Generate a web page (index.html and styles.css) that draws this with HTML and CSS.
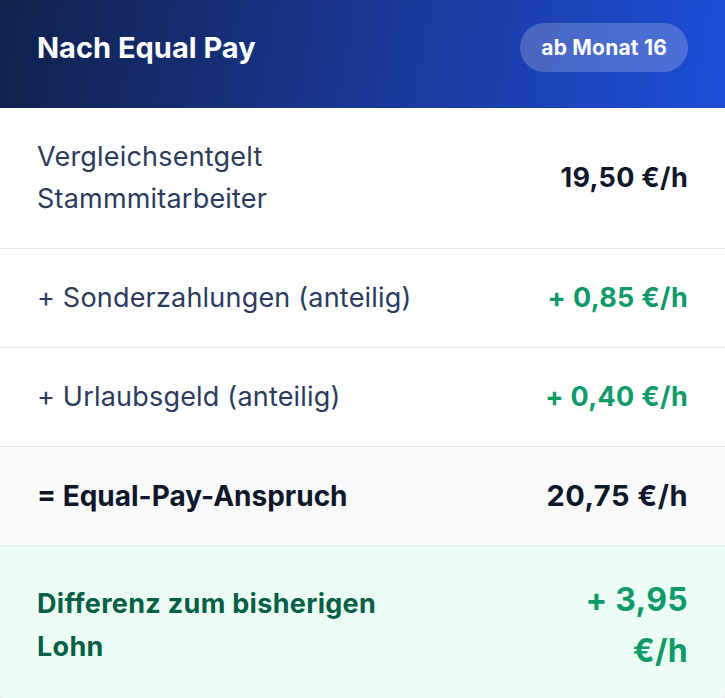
FILE: index.html
```html
<!DOCTYPE html>
<html lang="de">
<head>
  <meta charset="UTF-8" />
  <meta name="viewport" content="width=device-width, initial-scale=1.0" />
  <title>Nach Equal Pay</title>
  <link rel="stylesheet" href="styles.css">
</head>
<body>
  <div class="card">
    <div class="card-header">
      <h2>Nach Equal Pay</h2>
      <span class="badge">ab Monat 16</span>
    </div>

    <div class="row">
      <span class="label">Vergleichsentgelt<br>Stammmitarbeiter</span>
      <span class="value">19,50 €/h</span>
    </div>
    <div class="row">
      <span class="label">+ Sonderzahlungen (anteilig)</span>
      <span class="value plus">+ 0,85 €/h</span>
    </div>
    <div class="row">
      <span class="label">+ Urlaubsgeld (anteilig)</span>
      <span class="value plus">+ 0,40 €/h</span>
    </div>
    <div class="row total">
      <span class="label">= Equal-Pay-Anspruch</span>
      <span class="value">20,75 €/h</span>
    </div>
    <div class="row diff">
      <span class="label">Differenz zum bisherigen Lohn</span>
      <span class="value">+ 3,95 €/h</span>
    </div>
  </div>
</body>
</html>
```

FILE: styles.css
```css
body {
  margin: 0;
  font-family: Inter, "Noto Sans", sans-serif;
  background-color: #eef1f6;
}
.card {
  background-color: #fff;
  border-radius: 0 0 16px 16px;
  overflow: hidden;
}
.card-header {
  display: flex;
  align-items: center;
  justify-content: space-between;
  height: 108px;
  padding: 0 37px 14px;
  box-sizing: border-box;
  background: linear-gradient(100deg, #10214a 0%, #1a3a9a 55%, #1d4ed8 100%);
  color: #fff;
}
.card-header h2 {
  margin: 0;
  font-size: 29px;
  font-weight: 700;
}
.badge {
  display: flex;
  align-items: center;
  height: 49px;
  padding: 0 21px;
  border-radius: 25px;
  background-color: rgba(255,255,255,0.2);
  font-size: 21px;
  font-weight: 700;
  letter-spacing: 0.2px;
}
.row {
  display: flex;
  align-items: center;
  justify-content: space-between;
  padding: 28px 37px;
  border-bottom: 1px solid #e2e8f0;
  font-size: 27px;
  line-height: 42px;
}
.row:first-of-type {
  line-height: 43px;
}
.label {
  color: #2b3b5e;
  letter-spacing: 0.2px;
}
.value {
  font-weight: 700;
  color: #0f172a;
  text-align: right;
  font-size: 27px;
  letter-spacing: 0.3px;
}
.value.plus {
  color: #0f9a6a;
}
.total {
  background-color: #f8fafc;
}
.total .label {
  font-weight: 700;
  color: #0f172a;
  font-size: 28px;
  letter-spacing: 0;
}
.total .value {
  font-size: 29px;
  letter-spacing: 0.5px;
}
.diff {
  background-color: #ecfdf5;
  border-bottom: none;
}
.diff .label {
  max-width: 360px;
  font-weight: 700;
  font-size: 27px;
  line-height: 43px;
  color: #065f46;
  letter-spacing: 0.3px;
}
.diff .value {
  max-width: 130px;
  font-size: 32px;
  line-height: 51px;
  color: #0f9a6a;
}
```
